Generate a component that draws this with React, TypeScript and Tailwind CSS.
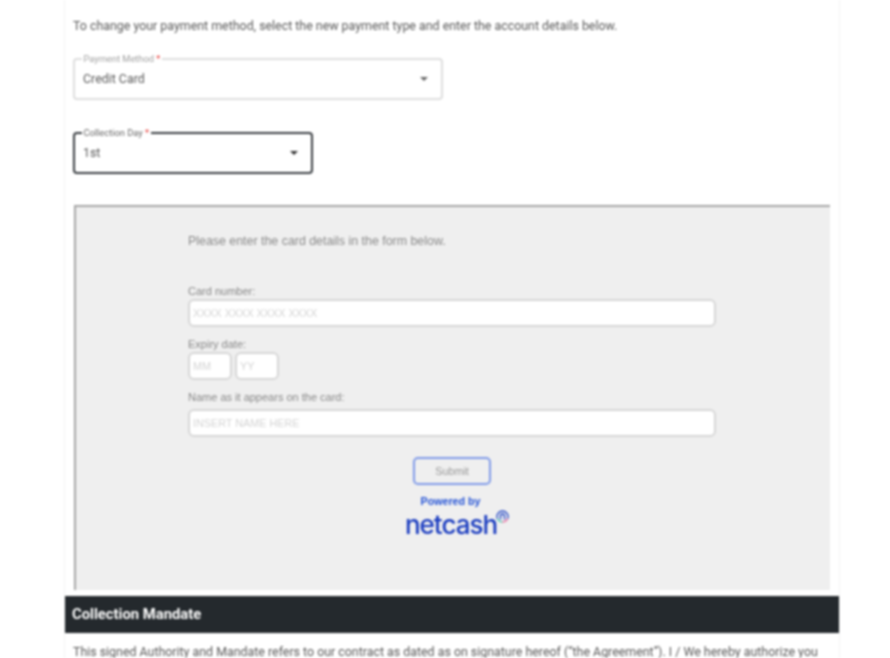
import React from 'react';

const roboto = "font-['Roboto',sans-serif]";
const arial = "font-['Liberation_Sans',Arial,sans-serif]";

const Caret = ({ color }: { color: string }) => (
  <svg width="8" height="4" viewBox="0 0 8 4" className="shrink-0">
    <path d="M0 0 L8 0 L4 4 Z" fill={color} />
  </svg>
);

const SelectBox = ({
  label,
  value,
  focused,
  className,
}: {
  label: string;
  value: string;
  focused?: boolean;
  className: string;
}) => (
  <fieldset
    className={`${className} ${
      focused ? 'border-2 border-[#3a3e42]' : 'border-2 border-[#dedede]'
    } h-[46px] pl-[8px] pr-[13px] rounded-[4px] flex items-center`}
  >
    <legend className={`${focused ? 'text-[#666]' : 'text-[#a0a0a0]'} text-[9.3px] leading-[10px] px-[1.5px] -ml-[1px]`}>
      {label} <span className="text-[#e53935]">*</span>
    </legend>
    <div className="flex items-center justify-between w-full -mt-[4px]">
      <span className="text-[12.4px] leading-[16px] text-[#5a5a5a]">{value}</span>
      <Caret color={focused ? '#333' : '#666'} />
    </div>
  </fieldset>
);

const CardField = ({ className, placeholder }: { className: string; placeholder: string }) => (
  <input
    readOnly
    placeholder={placeholder}
    className={`${className} h-[28px] bg-white border-2 border-[#d6d6d6] rounded-[6px] px-[3px] text-[10.8px] outline-none placeholder:text-[#d4d4d4]`}
  />
);

const NetcashMark = () => (
  <svg width="13" height="13" viewBox="0 0 13 13" className="-mt-[2px] -ml-[1px]">
    <path d="M1.5 8.8 A5.5 5.5 0 1 1 11.5 8.8" fill="none" stroke="#2347c4" strokeWidth="1.3" />
    <path d="M1.5 8.8 A5.5 5.5 0 0 0 6.5 12" fill="none" stroke="#4cc9b0" strokeWidth="1.3" />
    <path d="M6.5 12 A5.5 5.5 0 0 0 11.5 8.8" fill="none" stroke="#ee6a9c" strokeWidth="1.3" />
    <path d="M4.5 9.5 V6 A2 2 0 0 1 8.5 6 V9.5" fill="none" stroke="#2347c4" strokeWidth="1.3" />
  </svg>
);

const Netcash = () => (
  <div className="flex items-start justify-center h-[26px] pl-[10px]">
    <span className="font-['Inter',sans-serif] text-[26px] leading-[26px] font-medium tracking-[-1px] text-[#1a3cc0]">netcash</span>
    <NetcashMark />
  </div>
);

export default function App() {
  return (
    <div className={`${roboto} h-[658px] overflow-hidden bg-white [filter:blur(0.8px)]`}>
      <div className="ml-[64px] mr-[50px] h-full border-x border-[#f4f4f4]">
        <div className="pl-[8px] pr-[9px]">
          <p className="pt-[18px] text-[12.4px] leading-[16px] text-[#5a5a5a]">
            To change your payment method, select the new payment type and enter the account details below.
          </p>
          <SelectBox className="mt-[20px] w-[370px]" label="Payment Method" value="Credit Card" />
          <SelectBox className="mt-[28px] w-[240px]" label="Collection Day" value="1st" focused />

          <div className={`${arial} mt-[31px] ml-[1px] h-[385px] bg-[#efefef] border-t-2 border-l-2 border-[#a6a6a6] pl-[112px]`}>
            <div className="w-[528px] text-[#8a8a8a]">
              <p className="pt-[27px] text-[12.4px] leading-[14px]">Please enter the card details in the form below.</p>
              <p className="mt-[37px] text-[11px] leading-[12px] text-[#888]">Card number:</p>
              <CardField className="mt-[2px] w-full" placeholder="XXXX XXXX XXXX XXXX" />
              <p className="mt-[11px] text-[11px] leading-[12px] text-[#888]">Expiry date:</p>
              <div className="mt-[2px] flex gap-[3px]">
                <CardField className="w-[44px]" placeholder="MM" />
                <CardField className="w-[44px]" placeholder="YY" />
              </div>
              <p className="mt-[11px] text-[11px] leading-[12px] text-[#888]">Name as it appears on the card:</p>
              <CardField className="mt-[6px] w-full" placeholder="INSERT NAME HERE" />
              <div className="mt-[20px] flex justify-center">
                <button className="w-[78px] h-[28px] border-2 border-[#7f9ae8] rounded-[5px] text-[10.8px] text-[#999]">
                  Submit
                </button>
              </div>
              <p className="mt-[10px] pr-[3px] text-center text-[10.7px] leading-[12px] font-bold text-[#2453d6]">Powered by</p>
              <div className="mt-[5px]">
                <Netcash />
              </div>
            </div>
          </div>
        </div>

        <div className="mt-[6px] h-[37px] bg-[#24292d] flex items-center px-[7px]">
          <h2 className="text-[14.8px] font-bold text-white">Collection Mandate</h2>
        </div>
        <p className="pl-[8px] pt-[11px] text-[12.4px] leading-[16px] text-[#5a5a5a] whitespace-nowrap">
          This signed Authority and Mandate refers to our contract as dated as on signature hereof (“the Agreement”). I / We hereby authorize you
        </p>
      </div>
    </div>
  );
}
